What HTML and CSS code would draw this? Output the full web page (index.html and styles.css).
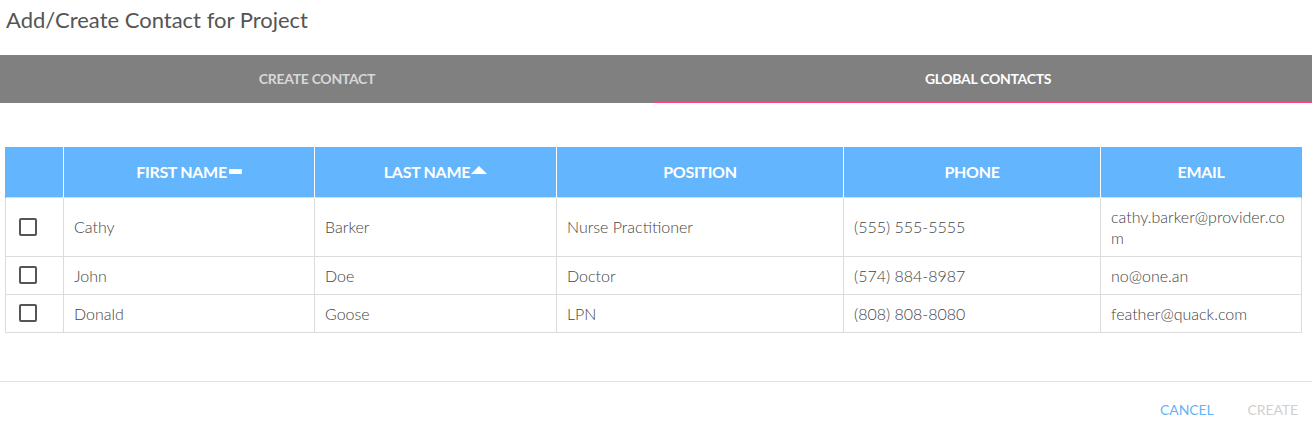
FILE: index.html
```html
<!DOCTYPE html>
<html>
<head>
<meta charset="utf-8">
<link rel="stylesheet" href="styles.css">
</head>
<body>
<div class="dialog">
  <h1 class="title">Add/Create Contact for Project</h1>
  <div class="tabs">
    <div class="tab tab-left">CREATE CONTACT</div>
    <div class="tab tab-right active">GLOBAL CONTACTS</div>
  </div>
  <div class="content">
    <table class="grid">
      <colgroup>
        <col class="c-check">
        <col class="c-first">
        <col class="c-last">
        <col class="c-pos">
        <col class="c-phone">
        <col class="c-email">
      </colgroup>
      <thead>
        <tr>
          <th></th>
          <th>FIRST NAME<span class="sort-bar"></span></th>
          <th>LAST NAME<span class="sort-up"></span></th>
          <th>POSITION</th>
          <th>PHONE</th>
          <th>EMAIL</th>
        </tr>
      </thead>
      <tbody>
        <tr>
          <td class="chk"><span class="box"></span></td>
          <td>Cathy</td>
          <td>Barker</td>
          <td>Nurse Practitioner</td>
          <td>(555) 555-5555</td>
          <td class="email">cathy.barker@provider.com</td>
        </tr>
        <tr>
          <td class="chk"><span class="box"></span></td>
          <td>John</td>
          <td>Doe</td>
          <td>Doctor</td>
          <td>(574) 884-8987</td>
          <td class="email">no@one.an</td>
        </tr>
        <tr>
          <td class="chk"><span class="box"></span></td>
          <td>Donald</td>
          <td>Goose</td>
          <td>LPN</td>
          <td>(808) 808-8080</td>
          <td class="email">feather@quack.com</td>
        </tr>
      </tbody>
    </table>
  </div>
  <div class="footer">
    <button class="btn btn-cancel">CANCEL</button>
    <button class="btn btn-create">CREATE</button>
  </div>
</div>
</body>
</html>
```

FILE: styles.css
```css
* { box-sizing: border-box; }
html, body { margin: 0; padding: 0; background: #fff; }
body { font-family: Lato, "Open Sans", sans-serif; color: #444; }

.dialog { width: 1312px; }

.title {
  margin: 0;
  padding: 6px 6px 0 6px;
  height: 55px;
  font-size: 22px;
  font-weight: 400;
  color: #555;
  line-height: 28px;
}

.tabs {
  display: grid;
  grid-template-columns: 654px 1fr;
  background: #808080;
  height: 48px;
}
.tab {
  display: flex;
  align-items: center;
  justify-content: center;
  font-size: 14px;
  font-weight: 700;
  color: rgba(255,255,255,0.7);
  letter-spacing: -0.3px;
  border-bottom: 2px solid transparent;
  padding-top: 1px;
}
.tab-left { padding-right: 20px; }
.tab-right { padding-left: 10px; }
.tab.active { color: #fff; border-bottom-color: #ff4081; }

.content { padding: 44px 11px 48px 5px; }

.grid {
  width: 1296px;
  border-collapse: collapse;
  table-layout: fixed;
}
.c-check { width: 58px; }
.c-first { width: 251px; }
.c-last { width: 242px; }
.c-pos { width: 287px; }
.c-phone { width: 257px; }
.c-email { width: 201px; }

.grid th {
  background: #63b6fd;
  color: #fff;
  font-size: 16px;
  font-weight: 700;
  letter-spacing: -0.3px;
  height: 50px;
  padding: 0 6px;
  text-align: center;
  border-left: 1px solid #fff;
  border-right: 1px solid #fff;
}
.grid th:first-child { border-left: 1px solid #63b6fd; }
.grid th:last-child { border-right: 1px solid #63b6fd; }

.sort-bar {
  display: inline-block;
  width: 13px;
  height: 5px;
  background: #fff;
  margin-left: 2px;
  vertical-align: 4px;
  border-radius: 1px;
}
.sort-up {
  display: inline-block;
  width: 0;
  height: 0;
  border-left: 8px solid transparent;
  border-right: 8px solid transparent;
  border-bottom: 8px solid #fff;
  margin-left: 1px;
  vertical-align: 4px;
}

.grid td {
  border: 1px solid #dcdcdc;
  padding: 8px 10px;
  font-size: 16px;
  font-weight: 300;
  line-height: 21px;
  color: #444;
  vertical-align: middle;
}
.grid td.email { word-break: break-all; }
.grid td.chk { padding: 8px 0 8px 13px; }
.box {
  display: block;
  width: 18px;
  height: 18px;
  border: 2px solid #555;
  border-radius: 2px;
}

.footer {
  border-top: 1px solid #e0e0e0;
  height: 43px;
  display: flex;
  justify-content: flex-end;
  align-items: center;
  padding: 14px 6px 0 0;
}
.btn {
  background: none;
  border: 0;
  font-family: Lato, sans-serif;
  font-size: 14px;
  font-weight: 400;
  padding: 0 8px;
  margin: 0 9px;
  letter-spacing: -0.1px;
}
.btn-cancel { color: #64b5f6; }
.btn-create { color: #cfcfcf; margin-right: 0; }
```
